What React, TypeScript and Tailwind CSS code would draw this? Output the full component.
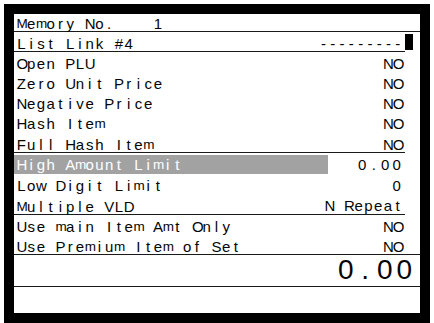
import React from "react";

const CW = 9.75;

function Cells({ text, big, w }: { text: string; big?: boolean; w?: number }) {
  const cw = w ?? (big ? CW * 2 : CW);
  return (
    <span className="inline-flex">
      {text.split("").map((c, i) => (
        <span
          key={i}
          className={
            "inline-block text-center" +
            (!big && (c === "M" || c === "m") ? " text-[13.5px]" : "")
          }
          style={{ width: cw }}
        >
          {c === " " ? "\u00a0" : c}
        </span>
      ))}
    </span>
  );
}

type RowProps = {
  label: string;
  value?: string;
  h: number;
  line?: boolean;
  cursor?: boolean;
  highlight?: boolean;
  vw?: number;
};

function Row({ label, value, h, line, cursor, highlight, vw }: RowProps) {
  return (
    <div className="flex pr-[7px]" style={{ height: h }}>
      <div
        className={
          "flex-1 flex justify-between " +
          (line ? "border-b border-[#1a1a1a]" : "")
        }
      >
        {highlight ? (
          <div className="w-[314px] h-[19px] mt-[2px] bg-[#a2a2a2] text-white pl-[2.5px] pt-[1.5px] leading-[16px]">
            <Cells text={label} />
          </div>
        ) : (
          <div className="pl-[2.5px] pt-[3.5px] leading-[16px]">
            <Cells text={label} />
          </div>
        )}
        <div className="pr-[2.5px] pt-[3.5px] leading-[16px]">
          {value !== undefined && <Cells text={value} w={vw} />}
        </div>
      </div>
      <div className="w-[8px] flex items-center">
        {cursor && <div className="w-[8px] h-[16px] bg-black" />}
      </div>
    </div>
  );
}

export default function App() {
  return (
    <div className="w-[434px] h-[323px] bg-white pt-[4px] pl-[4px] overflow-hidden">
      <div
        className="w-[426px] h-[319px] border-[10px] border-black bg-white text-[#050505] text-[15px] flex flex-col"
        style={{ fontFamily: '"Liberation Sans", Arial, sans-serif' }}
      >
        <div className="h-[18px] border-b border-[#1a1a1a] pl-[2.5px] pt-[1px] leading-[16px]">
          <Cells text="Memory No.    1" />
        </div>
        <Row label="List Link #4" value="---------" h={20} line cursor vw={9.3} />
        <Row label="Open PLU" value="NO" h={20} />
        <Row label="Zero Unit Price" value="NO" h={20} />
        <Row label="Negative Price" value="NO" h={20} />
        <Row label="Hash Item" value="NO" h={21} />
        <Row label="Full Hash Item" value="NO" h={20} line />
        <Row label="High Amount Limit" value="0.00" h={21} highlight vw={11.5} />
        <Row label="Low Digit Limit" value="0" h={20} vw={11.5} />
        <Row label="Multiple VLD" value="N Repeat" h={21} line />
        <Row label="Use main Item Amt Only" value="NO" h={20} />
        <div className="h-[20px] border-b border-[#1a1a1a] flex justify-between pr-[17.5px]">
          <div className="pl-[2.5px] pt-[3.5px] leading-[16px]">
            <Cells text="Use Premium Item of Set" />
          </div>
          <div className="pt-[3.5px] leading-[16px]">
            <Cells text="NO" />
          </div>
        </div>
        <div className="h-[32px] border-b border-[#1a1a1a] flex justify-end pr-[6px] pt-[1px] text-[28px] leading-[28px]">
          <Cells text="0.00" big />
        </div>
        <div className="flex-1" />
      </div>
    </div>
  );
}
